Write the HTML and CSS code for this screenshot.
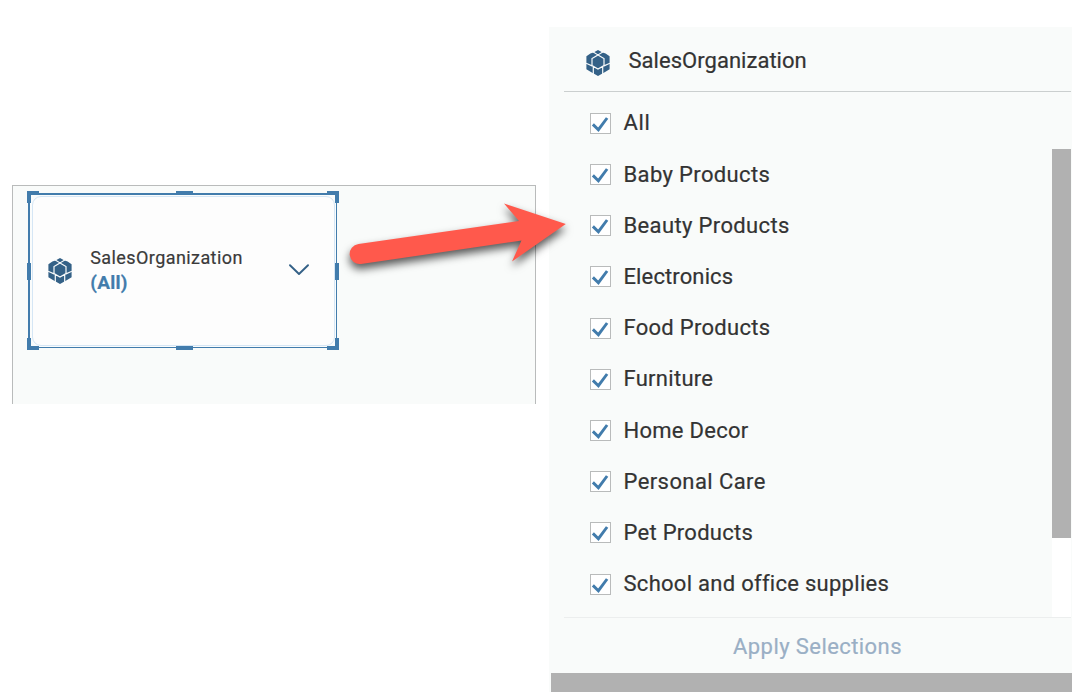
FILE: index.html
```html
<!DOCTYPE html>
<html lang="en">
<head>
<meta charset="utf-8">
<title>SalesOrganization filter</title>
<link rel="stylesheet" href="styles.css">
</head>
<body>
<svg class="defs" width="0" height="0">
  <symbol id="cube" viewBox="0 0 24 26">
    <path fill="#346187" d="M12 0L16 2.2L19.6 3.6L23.6 6.3V19.3L19.5 21.8L12 26L4.5 21.8L.4 19.3V6.3L4.4 3.6L8 2.2Z"/>
    <path fill="none" stroke="#f9fbfb" stroke-width="1.2" d="M6.4 1.6L12 4.9L17.6 1.6M12 4.9L18 8.5V15.6L12 19L6 15.6V8.5ZM0 13.2L6 15.9M24 13.2L18 15.9M7.3 16.4V24.5M16.7 16.4V24.5"/>
  </symbol>
  <symbol id="check" viewBox="1 1 19 19">
    <path fill="none" stroke="#427cac" stroke-width="2.9" d="M2.9 11.4L8.4 16.7L17.1 5"/>
  </symbol>
</svg>
<main class="stage">
  <section class="canvas">
    <div class="widget">
      <div class="card">
        <svg class="cube"><use href="#cube"/></svg>
        <div class="card-text">
          <span class="card-title">SalesOrganization</span>
          <span class="card-value">(All)</span>
        </div>
        <svg class="chevron" viewBox="0 0 20 12"><path d="M1 1.2L10 10L19 1.2"/></svg>
      </div>
      <i class="handle tl"></i><i class="handle tm"></i><i class="handle tr"></i>
      <i class="handle ml"></i><i class="handle mr"></i>
      <i class="handle bl"></i><i class="handle bm"></i><i class="handle br"></i>
    </div>
  </section>
  <section class="popup">
    <header class="popup-head">
      <svg class="cube"><use href="#cube"/></svg>
      <span class="popup-title">SalesOrganization</span>
    </header>
    <div class="popup-body">
      <ul class="list">
        <li><svg class="box"><use href="#check"/></svg><span class="t-all">All</span></li>
        <li><svg class="box"><use href="#check"/></svg><span class="t-baby">Baby Products</span></li>
        <li><svg class="box"><use href="#check"/></svg><span class="t-beauty">Beauty Products</span></li>
        <li><svg class="box"><use href="#check"/></svg><span class="t-elec">Electronics</span></li>
        <li><svg class="box"><use href="#check"/></svg><span class="t-food">Food Products</span></li>
        <li><svg class="box"><use href="#check"/></svg><span class="t-furn">Furniture</span></li>
        <li><svg class="box"><use href="#check"/></svg><span class="t-home">Home Decor</span></li>
        <li><svg class="box"><use href="#check"/></svg><span class="t-care">Personal Care</span></li>
        <li><svg class="box"><use href="#check"/></svg><span class="t-pet">Pet Products</span></li>
        <li><svg class="box"><use href="#check"/></svg><span class="t-school">School and office supplies</span></li>
      </ul>
      <div class="scroll"><div class="thumb"></div></div>
    </div>
    <footer class="popup-foot"><span class="apply">Apply Selections</span></footer>
    <div class="hscroll"></div>
  </section>
  <svg class="arrow" viewBox="340 190 240 95">
    <path d="M358.5 244L519 221L504 203.5L565.8 224L512 261.5L521.5 240.5L361 264A10 10 0 0 1 358.5 244Z"/>
  </svg>
</main>
</body>
</html>
```
FILE: styles.css
```css
* { box-sizing: border-box; }
body { margin: 0; background: #fff; font-family: Roboto, sans-serif; color: #333; -webkit-text-stroke: .2px; }
.defs { position: absolute; }
.stage { position: relative; display: flex; align-items: flex-start; width: 1086px; height: 696px; padding-left: 12px; overflow: hidden; }

.canvas { width: 524px; height: 219px; margin-top: 185px; padding: 7px 0 0 15px; background: #f9fbfa; border: 1px solid #b9bbbb; border-bottom: 0; }
.widget { position: relative; width: 309px; height: 155px; border: solid #427cac; border-width: 2px 1px 1px 2px; background: #fafcfc; padding: 1px 0 1px 2px; }
.card { display: flex; align-items: center; width: 303px; height: 150px; padding-left: 15px; background: #fdfdfd; border: 1px solid #d5e6f5; border-radius: 9px; }
.cube { width: 24px; height: 26px; flex: none; }
.card .cube { margin-left: -.4px; }
.card-text { display: flex; flex-direction: column; width: 199px; margin: -3px 0 0 18.6px; font-size: 18px; line-height: 25px; white-space: nowrap; }
.card-title { letter-spacing: .42px; color: #3a3a3a; }
.card-value { font-size: 19px; font-weight: 700; letter-spacing: .3px; color: #427cac; }
.chevron { width: 20px; height: 12px; margin-top: -2px; fill: none; stroke: #346187; stroke-width: 1.9; stroke-linecap: round; stroke-linejoin: round; }

.handle { position: absolute; border: 0 solid #427cac; }
.tl, .tr, .bl, .br { width: 12px; height: 12px; }
.tl, .tm, .tr { top: -4px; border-top-width: 4px; }
.bl, .bm, .br { bottom: -3px; border-bottom-width: 4px; }
.tl, .bl, .ml { left: -3px; border-left-width: 4px; }
.tr, .br, .mr { right: -3px; border-right-width: 4px; }
.tm, .bm { left: 146px; width: 17px; }
.ml, .mr { top: 68px; height: 17px; }

.popup { width: 523px; height: 665px; margin: 27px 0 0 13px; background: #f9fbfa; }
.popup-head { display: flex; align-items: center; height: 65px; margin: 0 1px 0 15px; padding: 7px 0 0 21.5px; border-bottom: 1px solid #cbcfcf; font-size: 22px; }
.popup-title { margin: -5px 0 0 19px; letter-spacing: .03px; }
.popup-body { display: flex; justify-content: space-between; height: 525px; padding-right: 1px; }
.list { margin: 5.8px 0 0; padding: 0 0 0 41px; list-style: none; font-size: 22px; line-height: 26px; }
.list li { display: flex; align-items: center; height: 51.2px; gap: 12.5px; white-space: nowrap; }
.list span { letter-spacing: .28px; }
.list .t-all { letter-spacing: .6px; }
.list .t-baby, .list .t-beauty { letter-spacing: .36px; }
.list .t-elec { letter-spacing: .12px; }
.list .t-care { letter-spacing: .42px; }
.box { width: 21px; height: 21px; flex: none; background: #fff; border: 1px solid #b9bbbb; }
.scroll { width: 19px; height: 468px; margin-top: 57px; background: #fff; }
.thumb { height: 389px; background: #b1b1b1; }
.popup-foot { display: flex; align-items: center; justify-content: center; height: 56px; margin: 0 1px 0 15px; padding-top: 2px; border-top: 1px solid #eceeee; font-size: 22px; color: #9aafc5; }
.apply { letter-spacing: .42px; }
.hscroll { height: 19px; margin-left: 2px; background: #b1b1b1; }

.arrow { position: absolute; left: 340px; top: 190px; width: 240px; height: 95px; overflow: visible; fill: #ff594c; filter: drop-shadow(0 5px 4px rgba(0, 0, 0, .65)); }
```
